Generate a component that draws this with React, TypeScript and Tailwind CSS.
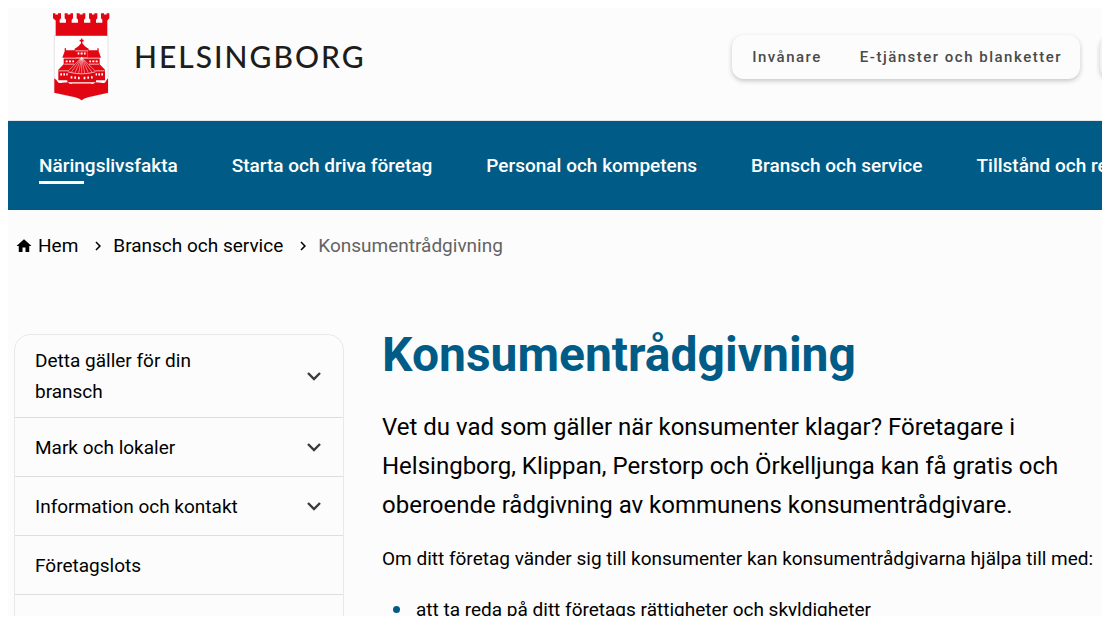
import { MdChevronRight, MdHome } from "react-icons/md";

const mainLinks = [
  { label: "Näringslivsfakta", active: true },
  { label: "Starta och driva företag" },
  { label: "Personal och kompetens" },
  { label: "Bransch och service" },
  { label: "Tillstånd och regler" },
];

const sideLinks = [
  { label: "Detta gäller för din bransch", expandable: true },
  { label: "Mark och lokaler", expandable: true },
  { label: "Information och kontakt", expandable: true },
  { label: "Företagslots", expandable: false },
];

function Crest() {
  return (
    <svg viewBox="36 36 174 266" className="w-[58px] h-[89px] shrink-0" aria-hidden="true">
      <path d="M43 106H204V278L144 291Q132 294 125 300Q118 294 106 291L43 278Z" fill="#fff" stroke="#d5d5d5" strokeWidth="2" />
      <g fill="#e20613">
        {/* Mural crown */}
        <path d="M39 39H46V43H54V39H63V54L59 59V68H78V59L74 54V39H83V43H91V39H99V54L95 59V68H114V59L110 54V39H119V43H128V39H136V54L132 59V68H151V59L147 54V39H156V43H163V39H172V54L168 59V68H187V59L183 54V39H192V43H200V39H208V54L202 61V107H47V61L39 54Z" />
        {/* Shield base */}
        <path d="M43 234Q50 238 54 246Q58 250 66 248L84 246Q90 254 98 250H152Q160 254 166 246L184 248Q192 250 196 246Q200 238 204 234V278L144 291Q132 294 125 300Q118 294 106 291L43 278Z" />
        {/* Castle */}
        <path d="M123 115H127V119H131V124H127V129Q130 135 146 146V154H142V172H108V154H104V146Q120 135 123 129V124H119V119H123Z" />
        <path d="M67 173L74 153V144H78V150H108V173ZM142 150H172V144H176V153L183 173H142Z" />
        <path d="M71 175H179V192L195 209V240H168V246H82V240H55V209L71 192Z" />
      </g>
      <g stroke="#fff" fill="none">
        <path
          d="M125 172L84 213M125 172L94 216M125 172L105 218M125 172L116 219M125 172V219M125 172L134 219M125 172L145 218M125 172L156 216M125 172L166 213"
          strokeWidth="1.4"
        />
        <path d="M106 152H144M73 192H103M147 192H177M56 212H84M166 212H194M84 215Q125 227 166 215" strokeWidth="2" />
      </g>
      <path
        d="M113 157h5v6h-5zM122 157h6v6h-6zM132 157h5v6h-5zM77 181h6v5h-6zM87 181h6v5h-6zM97 181h5v5h-5zM148 181h5v5h-5zM157 181h6v5h-6zM167 181h6v5h-6zM61 219h5v7h-5zM70 219h5v7h-5zM79 219h4v7h-4zM167 219h4v7h-4zM175 219h5v7h-5zM184 219h5v7h-5zM92 228h5v7h-5zM103 229h5v7h-5zM114 230h5v7h-5zM131 230h5v7h-5zM142 229h5v7h-5zM153 228h5v7h-5z"
        fill="#fff"
      />
    </svg>
  );
}

function ExpandIcon() {
  return (
    <svg viewBox="0 0 26 26" className="w-[26px] h-[26px] shrink-0 text-[#3a3a3a]" aria-hidden="true">
      <path d="M7 10L13 16L19 10" fill="none" stroke="currentColor" strokeWidth="2.4" />
    </svg>
  );
}

export default function App() {
  return (
    <div className="h-screen p-2 overflow-hidden bg-white font-['Roboto',sans-serif] text-black">
      <div className="h-full overflow-hidden bg-[#fcfcfc]">
        {/* Header */}
        <header className="flex items-start h-[113px] border-b border-gray-200">
          <a href="#" className="flex items-center gap-6 pt-1 pl-11">
            <Crest />
            <span className="pb-[2px] font-['Lato',sans-serif] text-[30px] leading-9 font-medium tracking-[2px] text-[#1d1d1b]">
              HELSINGBORG
            </span>
          </a>
          <nav className="flex gap-[38px] items-center h-11 pl-5 pr-[18px] mt-[27px] ml-auto mr-5 bg-[#fcfcfc] rounded-xl shadow-[0_2px_5px_rgba(0,0,0,0.22)] text-[15px] font-medium tracking-widest whitespace-nowrap text-[#4a4a4a]">
            <a href="#">Invånare</a>
            <a href="#">E-tjänster och blanketter</a>
          </nav>
          <div className="w-10 h-11 mt-[27px] -mr-[38px] shrink-0 bg-[#f2f2f2] rounded-xl shadow-[0_2px_5px_rgba(0,0,0,0.22)]" />
        </header>

        {/* Main navigation */}
        <nav className="flex items-center gap-[54px] h-[89px] pt-[2px] pl-[31px] overflow-hidden bg-[#005c86] text-[19px] font-medium whitespace-nowrap text-white">
          {mainLinks.map((link) => (
            <a key={link.label} href="#" className="relative shrink-0">
              {link.label}
              {link.active && <span className="absolute left-0 -bottom-[3px] w-[45px] h-[3px] bg-white" />}
            </a>
          ))}
        </nav>

        {/* Breadcrumb */}
        <nav className="flex items-center pt-5 pl-[7px] text-[19px] leading-[31px]">
          <a href="#" className="flex items-center gap-[5px]">
            <MdHome size={18} />
            Hem
          </a>
          <MdChevronRight size={18} className="ml-[11px] mr-[6px]" />
          <a href="#">Bransch och service</a>
          <MdChevronRight size={18} className="ml-[11px] mr-[6px]" />
          <span className="text-[#636363]">Konsumentrådgivning</span>
        </nav>

        <div className="flex items-start gap-[38px] pt-[73px] pl-[6px]">
          {/* Side menu */}
          <aside className="w-[330px] h-[400px] shrink-0 border border-[#e9e9e9] rounded-2xl text-[19px] leading-[31px]">
            <ul>
              {sideLinks.map((link) => (
                <li key={link.label} className="border-b border-[#dedede]">
                  <button className="flex items-center justify-between w-full min-h-[58px] py-[10px] pl-5 pr-4 text-left">
                    <span className="max-w-[215px]">{link.label}</span>
                    {link.expandable && <ExpandIcon />}
                  </button>
                </li>
              ))}
            </ul>
          </aside>

          {/* Article */}
          <main className="min-w-0 grow">
            <h1 className="text-5xl leading-[42px] font-bold text-[#005c86]">Konsumentrådgivning</h1>
            <p className="max-w-[700px] mt-8 text-2xl leading-[39px]">
              Vet du vad som gäller när konsumenter klagar? Företagare i Helsingborg, Klippan, Perstorp och
              Örkelljunga kan få gratis och oberoende rådgivning av kommunens konsumentrådgivare.
            </p>
            <p className="mt-[18px] text-[19px] leading-[31px] whitespace-nowrap">
              Om ditt företag vänder sig till konsumenter kan konsumentrådgivarna hjälpa till med:
            </p>
            <ul className="pl-[11px] mt-5 text-[19px] leading-[31px]">
              <li className="flex items-center gap-4">
                <span className="w-[7px] h-[7px] rounded-full bg-[#005c86]" />
                att ta reda på ditt företags rättigheter och skyldigheter
              </li>
            </ul>
          </main>
        </div>
      </div>
    </div>
  );
}
